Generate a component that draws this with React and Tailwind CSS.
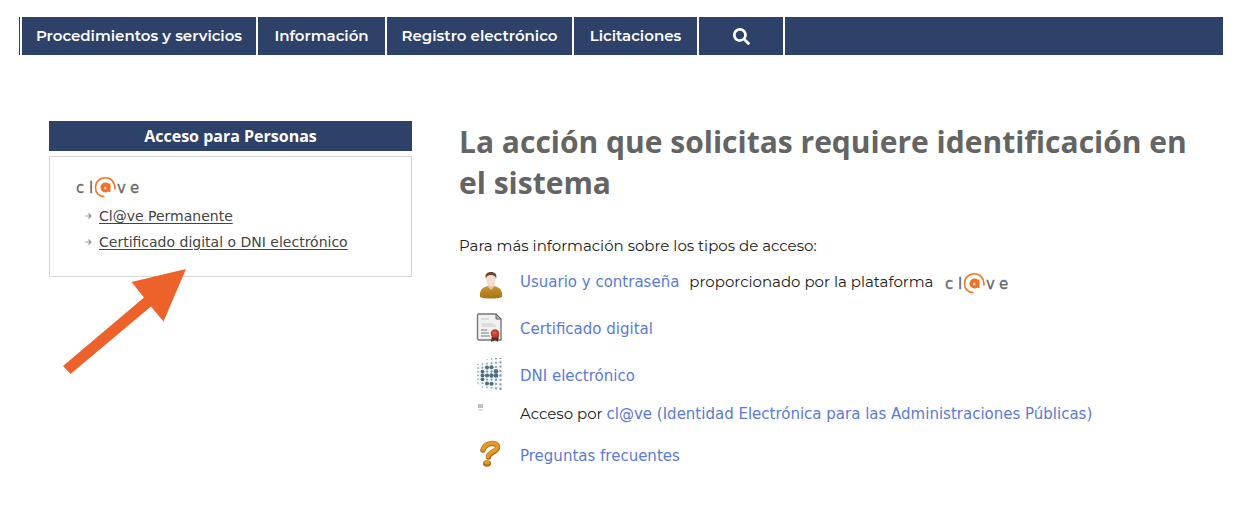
import { FaSearch } from 'react-icons/fa';

const navItems = [
  { label: 'Procedimientos y servicios', width: 'w-[236px]' },
  { label: 'Información', width: 'w-[129px]' },
  { label: 'Registro electrónico', width: 'w-[187px]' },
  { label: 'Licitaciones', width: 'w-[125px]' },
];

const accessLinks = ['Cl@ve Permanente', 'Certificado digital o DNI electrónico'];

const linkClass = "font-['DejaVu_Sans',Verdana,sans-serif] text-[15px] text-[#5b7bd5] hover:underline";

const ClaveLogo = () => (
  <svg width="64" height="24" viewBox="0 0 64 24" role="img" aria-label="Cl@ve" className="shrink-0">
    <g fill="#6b6b6b" stroke="#6b6b6b" strokeWidth="0.3" fontFamily="'DejaVu Sans', sans-serif" fontSize="15">
      <text x="0" y="18">c</text>
      <text x="13" y="18">l</text>
      <text x="41" y="18">v</text>
      <text x="54" y="18">e</text>
    </g>
    <path
      d="M39 14.500C39 7 35 2.800 29.500 2.800C23.500 2.800 19.500 7 19.500 12.500C19.500 18 23 21.800 28.500 21.500"
      fill="none"
      stroke="#f07a2c"
      strokeWidth="1.6"
    />
    <circle cx="29.500" cy="12.500" r="5" fill="#f0712a" />
    <path d="M33.500 8.500v8.500" fill="none" stroke="#f0712a" strokeWidth="1.8" />
    <ellipse cx="29.300" cy="13" rx="1.3" ry="1.6" fill="#fbd0b0" />
  </svg>
);

const UserIcon = () => (
  <svg width="28" height="40" viewBox="0 -8 28 40" aria-hidden="true">
    <defs>
      <linearGradient id="shirt" x1="0" y1="0" x2="0" y2="1">
        <stop offset="0" stopColor="#c89432" />
        <stop offset="1" stopColor="#a87312" />
      </linearGradient>
    </defs>
    <path d="M4 28c-1-7 3-10 8-11h6c5 1 9 4 8 11-5 2-17 2-22 0z" fill="url(#shirt)" />
    <path d="M12 15h6v3l-3 3-3-3z" fill="#e5c6b0" />
    <ellipse cx="15" cy="11" rx="4.6" ry="6.5" fill="#f3ddd0" />
    <path d="M10 10C8.500 5 11 3 15 3s6.500 2 5 7c-.5-3-2-4-5-4s-4.500 1-5 4z" fill="#70452f" />
  </svg>
);

const CertificateIcon = () => (
  <svg width="28" height="32" viewBox="0 0 28 32" aria-hidden="true">
    <path d="M3 2h17l5 5v21H3c-1 0-1.500-.5-1.500-1.500v-23C1.500 2.500 2 2 3 2z" fill="#f1f1f1" stroke="#777" strokeWidth="1.4" />
    <path d="M20 2v5h5z" fill="#b5b5b5" stroke="#666" strokeWidth="1" />
    <path d="M5 7h8M6 14h14M6 12h11" stroke="#c8c8c8" strokeWidth="1.2" />
    <path d="M5 18h6M5 21h8M5 24h9" stroke="#a2a2a2" strokeWidth="1.3" />
    <path d="M16 23l-1 7 4-2 3 2 1-7z" fill="#5d2a28" />
    <circle cx="19" cy="21.500" r="4.300" fill="#c23c2c" />
    <circle cx="18.500" cy="21" r="2" fill="#d95743" />
  </svg>
);

// radius of each dot, row by row
const dniDots = [
  [0, 0, 0.6, 0.8, 1, 1.2],
  [0.7, 0.8, 0.9, 1, 1, 1.1],
  [0.8, 1, 2, 2.1, 1.1, 1.1],
  [0.8, 1.9, 1.2, 1.2, 2.3, 1.2],
  [0.8, 2, 2.1, 2.2, 2.3, 1.2],
  [0.8, 1.9, 1.1, 1.1, 1.2, 1.1],
  [0.7, 0.9, 2, 2.1, 1.1, 1.1],
  [0, 0.7, 0.8, 0.9, 1.1, 1.2],
];

const DniIcon = () => (
  <svg width="28" height="34" viewBox="0 0 28 34" aria-hidden="true">
    <path d="M1 8L26 1v32L1 27z" fill="#f3f6f7" />
    {dniDots.map((row, y) =>
      row.map((r, x) => (
        <circle
          key={`${y}-${x}`}
          cx={2 + x * 4.5}
          cy={17.5 + (y - 4) * (3.7 + x * 0.14)}
          r={r}
          fill={r > 1.8 ? '#4f6f80' : '#8499a5'}
        />
      ))
    )}
  </svg>
);

const DocIcon = () => (
  <svg width="28" height="16" viewBox="0 0 28 16" aria-hidden="true">
    <rect x="2" y="0" width="5" height="4" fill="#c2c2c2" />
    <rect x="2" y="5" width="5" height="2" fill="#dedede" />
  </svg>
);

const QuestionIcon = () => (
  <svg width="28" height="32" viewBox="0 0 28 32" aria-hidden="true">
    <path d="M7 12C9 5 21 3 21.500 9c.3 5-9 5-9 10" fill="none" stroke="#b86b14" strokeWidth="5.500" strokeLinecap="round" />
    <path d="M7 11.500C9 4.500 21 3 21.500 8.500c.3 5-9.500 5-9.500 10" fill="none" stroke="#e29a2b" strokeWidth="3.600" strokeLinecap="round" />
    <ellipse cx="11" cy="25.500" rx="4" ry="3.200" fill="#b86b14" />
    <ellipse cx="11" cy="24.500" rx="3" ry="2" fill="#e09628" />
  </svg>
);

const InfoRow = ({ icon, height, children }) => (
  <li className={`flex items-center ${height}`}>
    <span className="w-11 shrink-0">{icon}</span>
    <span className="flex items-center pt-1 whitespace-pre">{children}</span>
  </li>
);

const App = () => {
  return (
    <div className="min-h-screen bg-white px-[19px] pt-[17px] font-[Montserrat,Inter,sans-serif] text-[15px] text-[#222]">
      {/* Main menu */}
      <nav className="flex h-[38px] bg-[#2e4168] pl-px text-white">
        {navItems.map((item) => (
          <a
            key={item.label}
            href="#"
            className={`flex items-center justify-center border-l-2 border-white font-semibold whitespace-nowrap ${item.width}`}
          >
            {item.label}
          </a>
        ))}
        <button
          type="button"
          aria-label="Buscar"
          className="flex w-[88px] items-center justify-center border-x-2 border-white"
        >
          <FaSearch size={17} />
        </button>
      </nav>

      <div className="flex gap-[47px] pt-[66px] pr-5 pl-[30px]">
        {/* Access box */}
        <aside className="relative w-[363px] shrink-0 self-start font-['DejaVu_Sans',Verdana,sans-serif]">
          <h2 className="h-[30px] bg-[#2e4168] text-center font-['Open_Sans',sans-serif] text-base leading-[30px] font-bold text-white">
            Acceso para Personas
          </h2>
          <div className="mt-[5px] h-[121px] border border-[#d6d6d6] pt-[18px] pl-[26px]">
            <ClaveLogo />
            <ul className="pt-1 pl-2">
              {accessLinks.map((label) => (
                <li key={label} className="flex h-[26px] items-center gap-[6px] text-sm text-[#444]">
                  <svg width="9" height="8" viewBox="0 0 9 8" aria-hidden="true">
                    <path d="M1.500 4h5M4.500 1.500L7 4L4.500 6.500" fill="none" stroke="#999" strokeWidth="1.200" />
                  </svg>
                  <a href="#" className="underline underline-offset-2 whitespace-nowrap">
                    {label}
                  </a>
                </li>
              ))}
            </ul>
          </div>
          <svg
            width="124"
            height="106"
            viewBox="0 0 124 106"
            aria-hidden="true"
            className="absolute top-[148px] left-[14px]"
          >
            <path d="M123 0L68.500 13L81 28.500L0 97L7.500 105L88 37.500L100.500 52.500z" fill="#ed622b" />
          </svg>
        </aside>

        {/* Content */}
        <main className="min-w-0 flex-1">
          <h1 className="font-['Open_Sans',sans-serif] text-[30px] leading-[41px] font-bold text-[#646464]">
            La acción que solicitas requiere identificación en el sistema
          </h1>
          <p className="mt-8 leading-[22px]">Para más información sobre los tipos de acceso:</p>
          <ul className="pl-[17px]">
            <InfoRow icon={<UserIcon />} height="h-[47px]">
              <a href="#" className={linkClass}>Usuario y contraseña</a>
              <span className="mr-3 ml-[10px]">proporcionado por la plataforma</span>
              <ClaveLogo />
            </InfoRow>
            <InfoRow icon={<CertificateIcon />} height="h-[47px]">
              <a href="#" className={linkClass}>Certificado digital</a>
            </InfoRow>
            <InfoRow icon={<DniIcon />} height="h-[47px]">
              <a href="#" className={linkClass}>DNI electrónico</a>
            </InfoRow>
            <InfoRow icon={<DocIcon />} height="h-7">
              <span>Acceso por </span>
              <a href="#" className={linkClass}>
                cl@ve (Identidad Electrónica para las Administraciones Públicas)
              </a>
            </InfoRow>
            <InfoRow icon={<QuestionIcon />} height="h-14">
              <a href="#" className={linkClass}>Preguntas frecuentes</a>
            </InfoRow>
          </ul>
        </main>
      </div>
    </div>
  );
};

export default App;
